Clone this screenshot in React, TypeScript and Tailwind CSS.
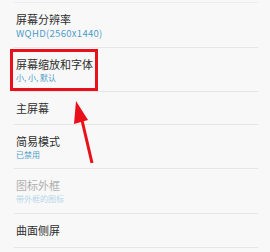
import React from 'react';

const items = [
  { title: '屏幕分辨率', sub: 'WQHD(2560x1440)', h: 'h-[45px]', latin: true },
  { title: '屏幕缩放和字体', sub: '小, 小, 默认', h: 'h-[44px]' },
  { title: '主屏幕', h: 'h-[33px]' },
  { title: '简易模式', sub: '已禁用', h: 'h-[44px]' },
  { title: '图标外框', sub: '带外框的图标', h: 'h-[45px]', disabled: true },
  { title: '曲面侧屏', h: 'h-[34px]' },
];

export default function App() {
  return (
    <div
      className="relative w-[270px] h-[252px] overflow-hidden bg-[#f8f8f8]"
      style={{ fontFamily: '"Noto Sans CJK SC", "Noto Sans", sans-serif' }}
    >
      {/* 설정 리스트 */}
      <div className="mx-[14px] mt-[2px] w-[244px] border-t border-[#ececec]">
        {items.map((item, i) => (
          <div key={i} className={`${item.h} px-[2px] pt-[10px] border-b border-[#e6e6e6]`}>
            <div
              className={`text-[11px] leading-[13px] ${
                item.disabled ? 'text-[#b0b0b0]' : 'text-[#2e2e2e]'
              }`}
            >
              {item.title}
            </div>
            {item.sub && (
              <div
                className={`mt-[2px] leading-[10px] ${
                  item.latin ? 'text-[9.5px] tracking-[0.3px]' : 'text-[8px]'
                } ${item.disabled ? 'text-[#b5d6e8]' : 'text-[#4d9ccb]'}`}
              >
                {item.sub}
              </div>
            )}
          </div>
        ))}
      </div>

      {/* 빨간 강조 박스 */}
      <div className="absolute left-[10px] top-[49px] w-[88px] h-[42px] border-[3px] border-[#e8101a]" />

      {/* 화살표 */}
      <svg className="absolute left-0 top-0" width="270" height="252" viewBox="0 0 270 252">
        <line x1="92" y1="163" x2="81" y2="116" stroke="#e8101a" strokeWidth="3" />
        <polygon points="76,101 74,124 88,120" fill="#e8101a" />
      </svg>
    </div>
  );
}
